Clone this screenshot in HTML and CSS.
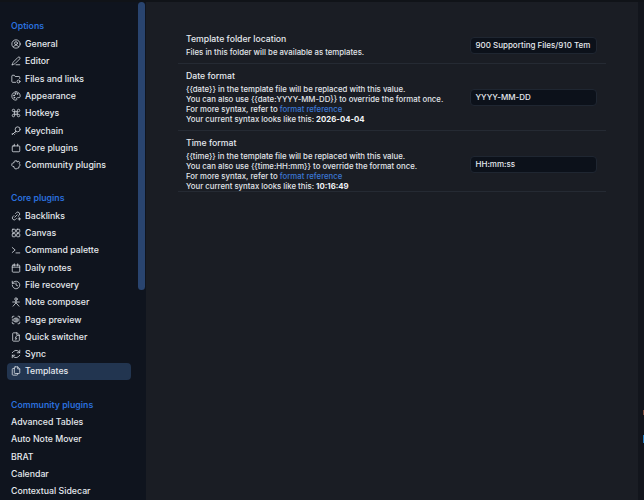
FILE: index.html
```html
<!DOCTYPE html>
<html lang="en">
<head>
<meta charset="utf-8">
<title>Templates settings</title>
<link rel="stylesheet" href="styles.css">
</head>
<body>
<svg class="defs" width="0" height="0" aria-hidden="true">
<defs>
<symbol id="i-general" viewBox="0 0 24 24"><circle cx="12" cy="12" r="10"/><circle cx="12" cy="10" r="3.500"/><path d="M6 19c1-3 3.500-4 6-4s5 1 6 4"/></symbol>
<symbol id="i-editor" viewBox="0 0 24 24"><path d="M3 21c1-4 2-6 3-7L17 3c1-1 3-1 4 0s1 3 0 4L10 18c-1 1-3 2-7 3z"/><path d="M12 21h9"/></symbol>
<symbol id="i-files" viewBox="0 0 24 24"><path d="M11 20H4a2 2 0 0 1-2-2V5a2 2 0 0 1 2-2h4l2 3h9a2 2 0 0 1 2 2v3"/><circle cx="18" cy="18" r="3.500"/></symbol>
<symbol id="i-appearance" viewBox="0 0 24 24"><path d="M12 2a10 10 0 1 0 0 20c2 0 2-1.500 1.500-3s.5-3 2.500-3h3c2 0 3-1.500 3-4 0-6-4.500-10-10-10z"/><circle cx="7" cy="11" r="1"/><circle cx="10" cy="7" r="1"/><circle cx="15" cy="7" r="1"/><circle cx="8" cy="16" r="1"/></symbol>
<symbol id="i-hotkeys" viewBox="0 0 24 24"><path d="M9 9h6v6H9zM9 9V6a3 3 0 1 0-3 3zM15 9h3a3 3 0 1 0-3-3zM9 15H6a3 3 0 1 0 3 3zM15 15v3a3 3 0 1 0 3-3z"/></symbol>
<symbol id="i-key" viewBox="0 0 24 24"><circle cx="16" cy="8" r="6"/><path d="M11.500 12.500 3 21v-3M6 18l2 2M9 15l2 2"/></symbol>
<symbol id="i-core" viewBox="0 0 24 24"><rect x="3" y="7" width="18" height="14" rx="2"/><path d="M8 7V3M16 7V3"/></symbol>
<symbol id="i-puzzle" viewBox="0 0 24 24"><path d="M9 4a3 3 0 0 1 6 0h2l3 3v3a3 3 0 0 1 0 5v2l-3 3h-3a3 3 0 0 0-5 0H6l-3-3v-3a3 3 0 0 0 0-5V7l3-3z" transform="rotate(45 12 12)"/></symbol>
<symbol id="i-backlinks" viewBox="0 0 24 24"><path d="M9 15l6-6M11 6l2-2a4.500 4.500 0 0 1 6.500 6.500L17 13M13 18l-2 2a4.500 4.500 0 0 1-6.500-6.500L7 11"/><path d="M17 19h6M20 16v6"/></symbol>
<symbol id="i-canvas" viewBox="0 0 24 24"><rect x="3" y="3" width="7.500" height="7.500" rx="1.500"/><rect x="13.500" y="3" width="7.500" height="7.500" rx="1.500"/><rect x="3" y="13.500" width="7.500" height="7.500" rx="1.500"/><rect x="13.500" y="13.500" width="7.500" height="7.500" rx="1.500"/></symbol>
<symbol id="i-terminal" viewBox="0 0 24 24"><path d="M3 6l7 6-7 6M12 19h9"/></symbol>
<symbol id="i-calendar" viewBox="0 0 24 24"><rect x="3" y="5" width="18" height="17" rx="2"/><path d="M3 10h18M8 2v5M16 2v5"/></symbol>
<symbol id="i-history" viewBox="0 0 24 24"><path d="M3 12a9 9 0 1 0 3-6.700L3 8M3 3v5h5M12 7v5l4 2"/></symbol>
<symbol id="i-composer" viewBox="0 0 24 24"><circle cx="12" cy="5" r="3"/><path d="M12 8v6l-7 8M12 14l7 8M4 12h16"/></symbol>
<symbol id="i-preview" viewBox="0 0 24 24"><path d="M3 7V5a2 2 0 0 1 2-2h2M17 3h2a2 2 0 0 1 2 2v2M21 17v2a2 2 0 0 1-2 2h-2M7 21H5a2 2 0 0 1-2-2v-2"/><circle cx="12" cy="12" r="3"/><path d="M4 12c4-6.500 12-6.500 16 0-4 6.500-12 6.500-16 0z"/></symbol>
<symbol id="i-switcher" viewBox="0 0 24 24"><path d="M14 2H6a2 2 0 0 0-2 2v16a2 2 0 0 0 2 2h12a2 2 0 0 0 2-2V8z"/><path d="M14 2v6h6M13 10l-3 5h4l-3 4"/></symbol>
<symbol id="i-sync" viewBox="0 0 24 24"><path d="M21 3v6h-6M3 21v-6h6"/><path d="M21 9a9 9 0 0 0-15-3L3 9M3 15a9 9 0 0 0 15 3l3-3"/></symbol>
<symbol id="i-templates" viewBox="0 0 24 24"><path d="M10 2h6l5 5v9a2 2 0 0 1-2 2h-9a2 2 0 0 1-2-2V4a2 2 0 0 1 2-2z"/><path d="M16 2v5h5M8 6H5a2 2 0 0 0-2 2v12a2 2 0 0 0 2 2h9a2 2 0 0 0 2-2v-2"/></symbol>
</defs>
</svg>
<div class="app">
  <div class="topbar"></div>
  <div class="main">
    <nav class="sidebar">
      <h2 class="group-title">Options</h2>
      <a class="item"><svg class="icon"><use href="#i-general"/></svg>General</a>
      <a class="item"><svg class="icon"><use href="#i-editor"/></svg>Editor</a>
      <a class="item"><svg class="icon"><use href="#i-files"/></svg>Files and links</a>
      <a class="item"><svg class="icon"><use href="#i-appearance"/></svg>Appearance</a>
      <a class="item"><svg class="icon"><use href="#i-hotkeys"/></svg>Hotkeys</a>
      <a class="item"><svg class="icon"><use href="#i-key"/></svg>Keychain</a>
      <a class="item"><svg class="icon"><use href="#i-core"/></svg>Core plugins</a>
      <a class="item"><svg class="icon"><use href="#i-puzzle"/></svg>Community plugins</a>
      <h2 class="group-title">Core plugins</h2>
      <a class="item"><svg class="icon"><use href="#i-backlinks"/></svg>Backlinks</a>
      <a class="item"><svg class="icon"><use href="#i-canvas"/></svg>Canvas</a>
      <a class="item"><svg class="icon"><use href="#i-terminal"/></svg>Command palette</a>
      <a class="item"><svg class="icon"><use href="#i-calendar"/></svg>Daily notes</a>
      <a class="item"><svg class="icon"><use href="#i-history"/></svg>File recovery</a>
      <a class="item"><svg class="icon"><use href="#i-composer"/></svg>Note composer</a>
      <a class="item"><svg class="icon"><use href="#i-preview"/></svg>Page preview</a>
      <a class="item"><svg class="icon"><use href="#i-switcher"/></svg>Quick switcher</a>
      <a class="item"><svg class="icon"><use href="#i-sync"/></svg>Sync</a>
      <a class="item active"><svg class="icon"><use href="#i-templates"/></svg>Templates</a>
      <h2 class="group-title">Community plugins</h2>
      <a class="item">Advanced Tables</a>
      <a class="item">Auto Note Mover</a>
      <a class="item">BRAT</a>
      <a class="item">Calendar</a>
      <a class="item">Contextual Sidecar</a>
    </nav>
    <div class="scrolltrack"><div class="thumb"></div></div>
    <section class="content">
      <div class="setting">
        <div class="info">
          <div class="name">Template folder location</div>
          <div class="desc">Files in this folder will be available as templates.</div>
        </div>
        <div class="field">900 Supporting Files/910 Tem</div>
      </div>
      <div class="setting">
        <div class="info">
          <div class="name">Date format</div>
          <div class="desc">{{date}} in the template file will be replaced with this value.<br>You can also use {{date:YYYY-MM-DD}} to override the format once.<br>For more syntax, refer to <a class="link">format reference</a><br>Your current syntax looks like this: <b>2026-04-04</b></div>
        </div>
        <div class="field">YYYY-MM-DD</div>
      </div>
      <div class="setting setting-last">
        <div class="info">
          <div class="name">Time format</div>
          <div class="desc">{{time}} in the template file will be replaced with this value.<br>You can also use {{time:HH:mm}} to override the format once.<br>For more syntax, refer to <a class="link">format reference</a><br>Your current syntax looks like this: <b>10:16:49</b></div>
        </div>
        <div class="field">HH:mm:ss</div>
      </div>
    </section>
    <aside class="edge"><span class="mark red"></span><span class="mark blue"></span></aside>
  </div>
</div>
</body>
</html>
```
FILE: styles.css
```css
* { box-sizing: border-box; }
html, body { margin: 0; height: 100%; overflow: hidden; background: #12151c; }
body { font-family: Inter, "Liberation Sans", sans-serif; color: #e3e7ec; }
.defs { position: absolute; }
.app { height: 500px; display: flex; flex-direction: column; }
.topbar { height: 2px; background: #101318; flex: none; }
.main { flex: 1; display: flex; min-height: 0; position: relative; }
.sidebar { width: 138px; flex: none; background: #0f141e; padding: 0 7.5px 0 6.5px; overflow: hidden; }
.group-title { margin: 16.4px 0 0; padding-left: 4.5px; height: 17px; line-height: 17px; font-size: 8.75px; font-weight: 600; color: #2a6fdc; }
.item { display: flex; align-items: center; height: 17.3px; padding-left: 4.5px; gap: 4px; font-size: 8.75px; font-weight: 500; color: #e6eaef; border-radius: 4px; white-space: nowrap; }
.item.active { background: #223550; }
.icon { width: 10px; height: 10px; flex: none; fill: none; stroke: #d9dee4; stroke-width: 1.9; stroke-linecap: round; stroke-linejoin: round; }
.scrolltrack { width: 8px; flex: none; background: #0f141e; }
.thumb { width: 7px; height: 288px; background: #29446f; border-radius: 4px; }
.content { flex: 1; min-width: 0; background: #1a1d24; padding: 25px 32px 0 31.5px; }
.setting { display: flex; align-items: center; justify-content: space-between; padding: 6px 9px 6px 8.5px; border-bottom: 1px solid #252a33; }
.setting-last { padding-top: 5.5px; padding-bottom: 0; }
.name { font-size: 8.7px; font-weight: 500; line-height: 12px; color: #e6eaef; margin-bottom: 2px; }
.desc { font-size: 7.8px; font-weight: 500; line-height: 10.1px; color: #e2e6eb; white-space: nowrap; }
.desc b { font-weight: 700; color: #f1f3f6; }
.link { color: #3b78d4; }
.field { width: 127px; height: 17px; flex: none; padding: 0 4.5px; line-height: 15px; font-size: 8px; font-weight: 500; color: #e6eaef; background: #0c111a; border: 1px solid #1f2631; border-radius: 4px; overflow: hidden; white-space: nowrap; }
.edge { width: 6px; flex: none; background: #12151c; position: relative; }
.mark { position: absolute; right: 0; width: 1.300px; }
.mark.red { top: 408px; height: 5px; background: #7a4a3a; }
.mark.blue { top: 433px; height: 8px; background: #2680c4; }
```
